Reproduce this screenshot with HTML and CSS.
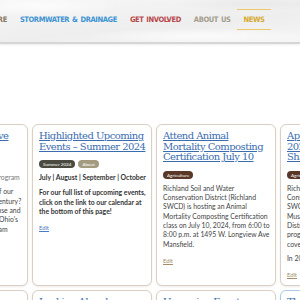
FILE: index.html
```html
<!DOCTYPE html>
<html lang="en">
	<head>
		<meta charset="UTF-8">
		<title>News</title>
		<link rel="stylesheet" href="styles.css">
	</head>
	<body>
		<header class="site-header">
			<nav class="main-nav">
				<ul>
					<li class="nav-ag"><a href="#">Agriculture</a></li>
					<li class="nav-storm"><a href="#">Stormwater &amp; Drainage</a></li>
					<li class="nav-involved"><a href="#">Get Involved</a></li>
					<li class="nav-about"><a href="#">About Us</a></li>
					<li class="nav-news current"><a href="#">News</a></li>
				</ul>
			</nav>
		</header>

		<main class="news">
			<div class="cards">
				<!--第一行-->
				<div class="card">
					<h3><a href="#">Farmlands Incentive Programs</a></h3>
					<div class="tags"><span class="tag tag-ag">Agriculture</span></div>
					<p class="sub">Read about the cost share program</p>
					<p>Are you ready to take care of our<br>soil and water for the next century?<br>Find out how producer can use and<br>benefiting from practices in Ohio's<br>and H2Ohio incentive program</p>
				</div>

				<div class="card">
					<h3><a href="#">Highlighted Upcoming Events – Summer 2024</a></h3>
					<div class="tags">
						<span class="tag tag-summer">Summer 2024</span>
						<span class="tag tag-about">About</span>
					</div>
					<p class="months">July | August | September | October</p>
					<p class="strong">For our full list of upcoming events,<br>click on the link to our calendar at<br>the bottom of this page!</p>
					<a class="edit" href="#">Edit</a>
				</div>

				<div class="card">
					<h3><a href="#">Attend Animal Mortality Composting Certification July 10</a></h3>
					<div class="tags"><span class="tag tag-ag">Agriculture</span></div>
					<p>Richland Soil and Water<br>Conservation District (Richland<br>SWCD) is hosting an Animal<br>Mortality Composting Certification<br>class on July 10, 2024, from 6:00 to<br>8:00 p.m. at 1495 W. Longview Ave<br>Mansfield.</p>
					<a class="edit edit-ag" href="#">Edit</a>
				</div>

				<div class="card">
					<h3><a href="#">Apply for the<br>2024 Riparian<br>Shade Tree Program</a></h3>
					<div class="tags"><span class="tag tag-ag">Agriculture</span></div>
					<p>Richland Soil and Water<br>Conservation District (Richland<br>SWCD) and the<br>Muskingum Watershed<br>District are offering a<br>program for landowners<br>covering tree planting costs.</p>
					<p>In 2023 we planted 400 trees.</p>
					<a class="edit edit-ag" href="#">Edit</a>
				</div>

				<!--第二行-->
				<div class="card">
					<h3><a href="#">Soil Health Workshop</a></h3>
				</div>
				<div class="card">
					<h3><a href="#">Looking Ahead</a></h3>
				</div>
				<div class="card">
					<h3><a href="#">Upcoming Event</a></h3>
				</div>
				<div class="card card-storm">
					<h3><a href="#">The Rain Garden</a></h3>
				</div>
			</div>
		</main>
	</body>
</html>
```

FILE: styles.css
```css
* {
	margin: 0;
	padding: 0;
	box-sizing: border-box;
}

ul {
	list-style: none
}

a {
	text-decoration: none;
	color: inherit;
}

body {
	width: 300px;
	height: 300px;
	overflow: hidden;
	background-color: #fff;
	font-family: Lato, "Open Sans", sans-serif;
	color: #444;
}

/* 头部 */
.site-header {
	height: 44px;
	padding-top: 9px;
	background-color: #f3f3f3;
	background-image:
		radial-gradient(ellipse 80px 10px at 40px 6px, #fcfcfc, transparent),
		radial-gradient(ellipse 120px 8px at 200px 36px, #fbfbfb, transparent),
		radial-gradient(ellipse 90px 7px at 260px 4px, #e9e9e9, transparent),
		linear-gradient(175deg, #f6f6f6, #eeeeee 60%, #f5f5f5);
	border-bottom: 2px solid #d6d6d6;
	box-shadow: 0 1px 2px rgba(0, 0, 0, .08);
}

.main-nav ul {
	display: flex;
	justify-content: flex-end;
	padding-right: 29px;
}

.main-nav li {
	padding: 0 6.5px;
	height: 21px;
	line-height: 19px;
	border-top: 1px solid transparent;
	border-bottom: 1px solid transparent;
	white-space: nowrap;
	font-family: "Liberation Sans Narrow", "DejaVu Sans Condensed", sans-serif;
	font-weight: bold;
	font-size: 7.5px;
	letter-spacing: -.4px;
	word-spacing: 1px;
	text-transform: uppercase;
}

.nav-ag { color: #8a7560; }
.nav-storm { color: #3b93d3; }
.nav-involved { color: #b8464a; }
.nav-about { color: #a39c8c; }
.nav-news { color: #d6a92e; }

.main-nav li.current {
	border-color: #ecc869;
}

/* 卡片 */
.news {
	padding-top: 80px;
}

.cards {
	display: grid;
	grid-template-columns: repeat(4, 120px);
	grid-auto-rows: 162px;
	gap: 4px;
	margin-left: -92px;
}

.card {
	border: 1px solid #dacfc2;
	border-radius: 6px;
	padding: 6px 4px 6px 6px;
	background-color: #fff;
	box-shadow: 0 1px 2px rgba(120, 100, 80, .12);
	font-size: 6.85px;
	line-height: 9.3px;
	overflow: hidden;
	white-space: nowrap;
}

.card-storm {
	border-color: #a9cbe7;
}

.card h3 {
	font-family: "DejaVu Serif", serif;
	font-weight: normal;
	font-size: 10px;
	line-height: 10.6px;
	letter-spacing: -.55px;
	white-space: normal;
	color: #3a6db0;
}

.card h3 a {
	text-decoration: underline;
	text-decoration-thickness: 1px;
}

.tags {
	display: flex;
	gap: 3px;
	margin: 8px 0 5px;
}

.tag {
	display: inline-block;
	height: 8px;
	padding: 0 4px;
	border-radius: 4px;
	font-size: 4.6px;
	line-height: 8px;
	color: #fff;
}

.tag-ag { background-color: #5a3827; }
.tag-summer { background-color: #4a4a40; }
.tag-about { background-color: #a39a80; }

.sub {
	color: #777;
}

.months,
.strong {
	font-weight: bold;
	color: #333;
}

.months {
	margin-bottom: 6px;
}

.card p + p {
	margin-top: 5px;
}

.edit {
	display: inline-block;
	margin-top: 7px;
	font-size: 5.8px;
	color: #4a7cc0;
	text-decoration: underline;
}

.edit-ag {
	color: #a58d68;
}
```
